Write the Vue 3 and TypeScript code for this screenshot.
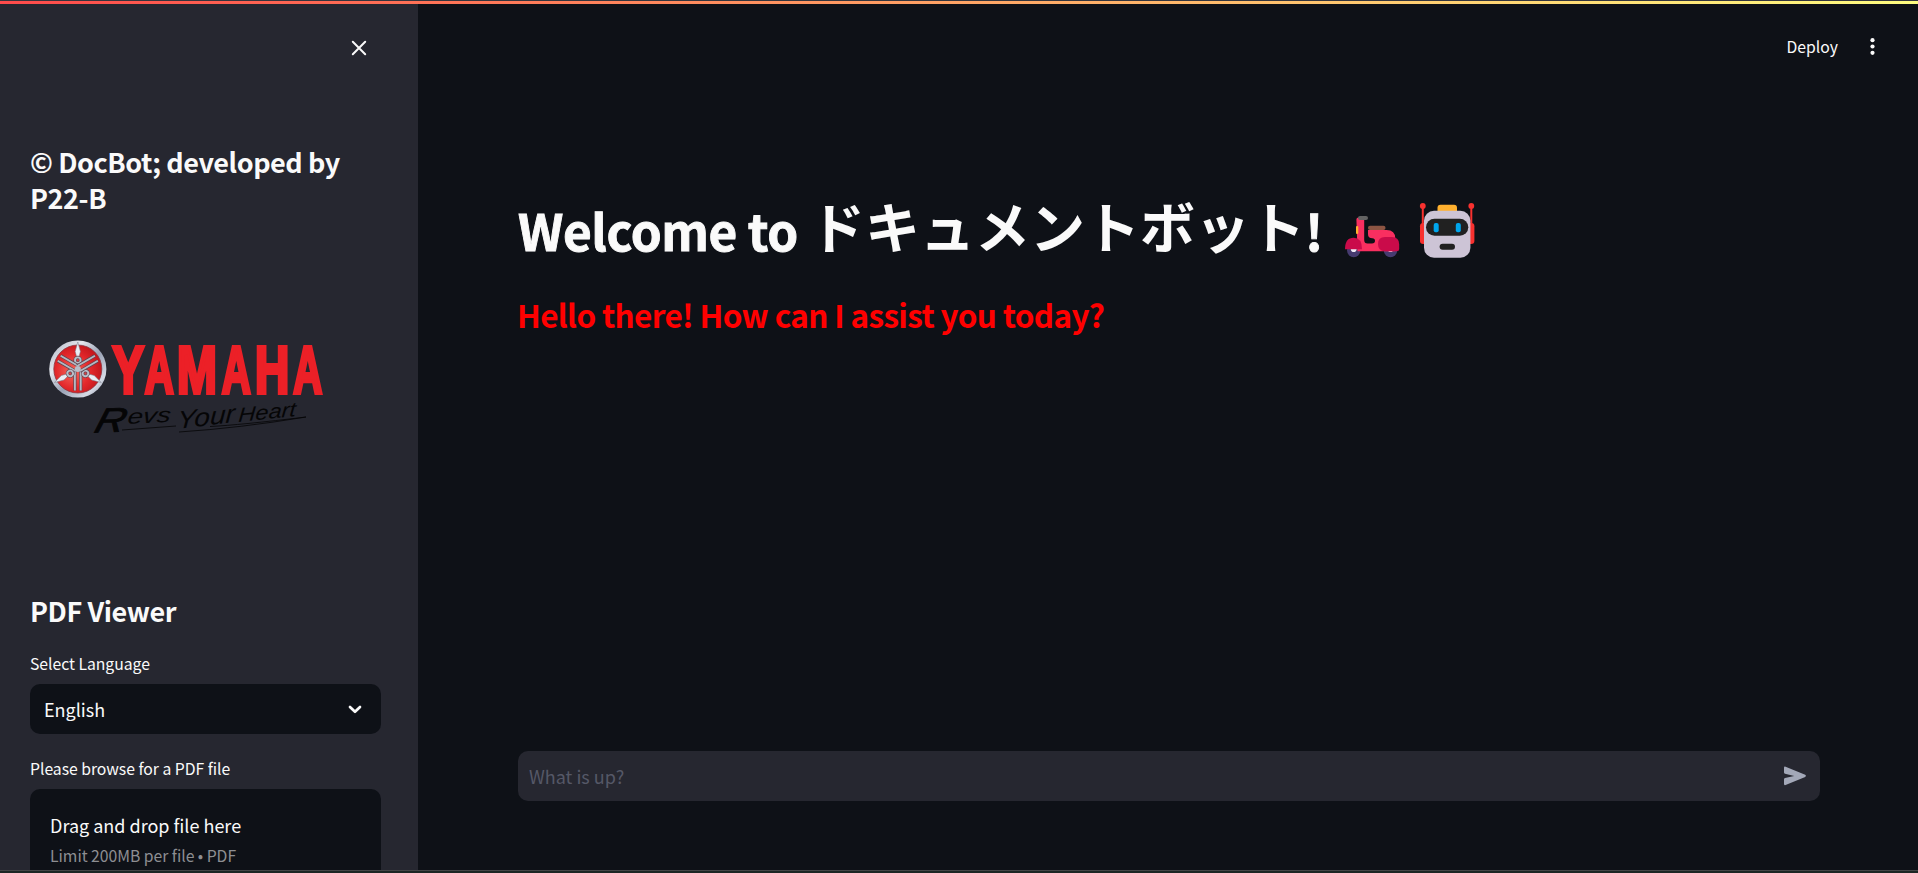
<script setup lang="ts">
import { ref } from 'vue'

interface BrandGlyph {
  char: string
  x: number
  width: number
}

const language = ref<string>('English')
const prompt = ref<string>('')
const spokes: number[] = [0, 120, 240]
const brand: BrandGlyph[] = [
  { char: 'Y', x: 118, width: 45 },
  { char: 'A', x: 164, width: 41.5 },
  { char: 'M', x: 210, width: 57 },
  { char: 'A', x: 274, width: 41.5 },
  { char: 'H', x: 321.5, width: 49 },
  { char: 'A', x: 376, width: 41.5 },
]
</script>

<template>
  <div class="app">
    <div class="decoration"></div>
    <aside class="sidebar">
      <div class="close-row">
        <button class="icon-button" aria-label="Close sidebar">
          <svg width="16" height="16" viewBox="0 0 16 16"><path d="M1.8 1.8 14.2 14.2M14.2 1.8 1.8 14.2" stroke="#fafafa" stroke-width="2" stroke-linecap="round" /></svg>
        </button>
      </div>
      <h2 class="credit">© DocBot; developed by P22-B</h2>
      <svg class="logo" width="310" height="130" viewBox="0 0 310 130">
        <defs>
          <linearGradient id="rim" x1="0" y1="0" x2="1" y2="1">
            <stop offset="0" stop-color="#a9adb9" />
            <stop offset=".3" stop-color="#e4e7ee" />
            <stop offset=".55" stop-color="#9aa2b5" />
            <stop offset=".8" stop-color="#d5dae5" />
            <stop offset="1" stop-color="#7d8498" />
          </linearGradient>
          <radialGradient id="disc" cx=".4" cy=".55" r=".6">
            <stop offset="0" stop-color="#f36b60" />
            <stop offset=".6" stop-color="#e3282b" />
            <stop offset="1" stop-color="#c3161c" />
          </radialGradient>
        </defs>
        <circle cx="47.8" cy="49" r="28.6" fill="url(#rim)" />
        <circle cx="47.8" cy="49" r="24" fill="url(#disc)" stroke="#8b3640" stroke-width=".8" />
        <g v-for="angle in spokes" :key="angle" :transform="`rotate(${angle} 47.8 49)`">
          <path d="M44.9 50V70.5M50.7 50V70.5" stroke="#5b4650" stroke-width="3.2" />
          <path d="M44.9 50V70.5M50.7 50V70.5" stroke="#b4b8c3" stroke-width="1.9" />
          <path d="M47.8 22 50.4 31.5 48.9 37H46.7L45.2 31.5Z" fill="#e9edf4" stroke="#777b89" stroke-width=".5" />
          <circle cx="47.8" cy="40.2" r="2.8" fill="#d94246" stroke="#5b4650" stroke-width="3.2" />
          <circle cx="47.8" cy="40.2" r="2.8" fill="none" stroke="#b9bdc8" stroke-width="1.9" />
        </g>
        <circle cx="47.8" cy="49" r="3" fill="#b9bdc8" />
        <g transform="translate(0 73) scale(.7 1)">
          <text class="brand" y="0"><tspan v-for="glyph in brand" :key="glyph.x" :x="glyph.x" :textLength="glyph.width" lengthAdjust="spacingAndGlyphs">{{ glyph.char }}</tspan></text>
        </g>
        <g class="tagline">
          <text transform="translate(63 112.5) rotate(-2) skewX(-18)" font-size="34" stroke="#050506" stroke-width=".8" textLength="30" lengthAdjust="spacingAndGlyphs">R</text>
          <text transform="translate(97 104) rotate(-3) skewX(-10)" font-size="21" textLength="43" lengthAdjust="spacingAndGlyphs">evs</text>
          <text transform="translate(147 109) rotate(-7) skewX(-10)" font-size="25" textLength="58" lengthAdjust="spacingAndGlyphs">Your</text>
          <text transform="translate(208 102) rotate(-6) skewX(-10)" font-size="20" textLength="58" lengthAdjust="spacingAndGlyphs">Heart</text>
          <path d="M92 110 146 106M149 112Q210 108 276 97Q210 105 180 106.5" fill="none" stroke="#050506" stroke-width=".8" />
        </g>
      </svg>
      <h2 class="viewer-title">PDF Viewer</h2>
      <label class="label">Select Language</label>
      <div class="select">
        <span>{{ language }}</span>
        <svg width="14" height="9" viewBox="0 0 14 9"><path d="M2 2 7 6.8 12 2" fill="none" stroke="#fafafa" stroke-width="2.7" stroke-linecap="round" stroke-linejoin="round" /></svg>
      </div>
      <label class="label">Please browse for a PDF file</label>
      <div class="dropzone">
        <span class="drop-title">Drag and drop file here</span>
        <span class="drop-limit">Limit 200MB per file • PDF</span>
      </div>
    </aside>
    <main class="main">
      <header class="toolbar">
        <span class="deploy">Deploy</span>
        <svg width="5" height="17" viewBox="0 0 5 17" fill="#fafafa"><circle cx="2.5" cy="2.2" r="2.1" /><circle cx="2.5" cy="8.5" r="2.1" /><circle cx="2.5" cy="14.8" r="2.1" /></svg>
      </header>
      <h1 class="title">
        <span class="title-latin">Welcome to</span>
        <span class="title-kana">ドキュメントボット</span>
        <span class="title-mark">!</span>
        <svg class="emoji" width="56" height="56" viewBox="0 0 56 56">
          <circle cx="9.7" cy="47.5" r="6.7" fill="#463b70" /><circle cx="9.7" cy="46.3" r="2.8" fill="#f3eef8" />
          <circle cx="46.5" cy="47.5" r="6.7" fill="#463b70" /><circle cx="46.5" cy="46.3" r="2.8" fill="#f3eef8" />
          <path d="M12.4 16.5Q12.4 14.5 14.5 14.5H20.2V37Q20.2 40.5 23.5 40.5H28Q31 40.5 31 37.8 31 35.3 28.4 35.3 24 35.3 24 31V27H42.5Q51.3 27 51.3 35.5V48.3H13.5Z" fill="#f92f60" />
          <path d="M1 46.2Q1 34.8 9.7 34.8 18 34.8 18 46.2Z" fill="#ca0b4a" />
          <path d="M34 41Q34 34 41 34H48Q55.2 34 55.2 41.5V46Q55.2 48.3 53 48.3H41Q34 48.3 34 41Z" fill="#ca0b4a" />
          <rect x="24" y="22.8" width="17.5" height="4.2" rx="2" fill="#8c5543" />
          <rect x="14" y="13" width="10" height="4" rx="2" fill="#636363" />
          <rect x="12" y="23" width="2.3" height="8" rx="1.1" fill="#ffb02e" />
        </svg>
        <svg class="emoji robot" width="56" height="56" viewBox="0 0 56 56">
          <path d="M3.8 3V25M52.3 3V25" stroke="#f8312f" stroke-width="2" />
          <circle cx="3.8" cy="2.9" r="2.9" fill="#f8312f" /><circle cx="52.3" cy="2.9" r="2.9" fill="#f8312f" />
          <rect x="1" y="20" width="54.4" height="21" rx="3.2" fill="#f8312f" />
          <rect x="18.5" y="1.7" width="19.5" height="10" rx="3" fill="#ffb02e" />
          <rect x="5" y="7.7" width="46.4" height="47" rx="10" fill="#cdc4d6" />
          <rect x="7" y="15.7" width="42.3" height="17" rx="8.5" fill="#212121" />
          <rect x="14.7" y="20" width="5" height="9.2" rx="2" fill="#00a6ed" />
          <rect x="36.8" y="20" width="5" height="9.2" rx="2" fill="#00a6ed" />
          <rect x="20.6" y="40.7" width="15.4" height="6" rx="3" fill="#212121" />
        </svg>
      </h1>
      <h3 class="greeting">Hello there! How can I assist you today?</h3>
      <div class="chat">
        <input v-model="prompt" class="chat-input" placeholder="What is up?" />
        <svg width="24" height="20" viewBox="0 0 24 20"><path d="M1 1.8Q1 .2 2.6 .7L22.2 8.8Q23.8 9.9 22.2 11L2.6 19.1Q1 19.6 1 18.1V13.3Q1 12.4 2 12L11.2 9.9 2 7.8Q1 7.5 1 6.6Z" fill="#a3a8b8" /></svg>
      </div>
    </main>
    <footer class="edge"></footer>
  </div>
</template>

<style>
body {
  margin: 0;
  background: #0e1117;
}
</style>

<style scoped>
.app {
  position: relative;
  display: flex;
  width: 100vw;
  height: 873px;
  overflow: hidden;
  color: #fafafa;
  background: #0e1117;
  font-family: "Noto Sans CJK JP", "Noto Sans", sans-serif;
}
.decoration {
  position: absolute;
  inset: 0 0 auto;
  height: 3px;
  border-top: 1px solid #35363e;
  background: linear-gradient(90deg, #ff4b4b, #fffd80);
}
.edge {
  position: absolute;
  inset: auto 0 0;
  height: 2px;
  border-top: 1px solid #434546;
  background: #1c2624;
}
.sidebar {
  box-sizing: border-box;
  width: 418px;
  flex: none;
  padding: 0 37px 0 30px;
  display: flex;
  flex-direction: column;
  background: #262730;
}
.close-row {
  box-sizing: border-box;
  flex: none;
  display: flex;
  justify-content: flex-end;
  height: 144px;
  padding: 40px 14px 0 0;
}
.icon-button {
  display: block;
  width: 16px;
  height: 16px;
  padding: 0;
  border: 0;
  background: none;
}
.icon-button svg { display: block; }
h1, h2, h3 { margin: 0; }
.credit, .viewer-title {
  flex: none;
  font-size: 27px;
  line-height: 36px;
  font-weight: 600;
  letter-spacing: -0.42px;
}
.logo {
  flex: none;
  margin: 104px 0 143px;
}
.brand {
  font: bold 66px "Liberation Sans", sans-serif;
  fill: #ec2027;
  stroke: #ec2027;
  stroke-width: 4px;
}
.tagline {
  font-family: "Liberation Sans", sans-serif;
  font-style: italic;
  fill: #050506;
}
.label {
  flex: none;
  margin-top: 22px;
  font-size: 15.75px;
  line-height: 26px;
  letter-spacing: -0.03px;
}
.select {
  box-sizing: border-box;
  flex: none;
  display: flex;
  align-items: center;
  justify-content: space-between;
  height: 50px;
  margin-top: 7px;
  padding: 0 19px 0 14px;
  border-radius: 10px;
  background: #0e1117;
  font-size: 18px;
  line-height: 32px;
}
.dropzone {
  flex: none;
  display: flex;
  flex-direction: column;
  height: 106px;
  margin-top: 7px;
  padding: 20px;
  border-radius: 10px;
  background: #0e1117;
  font-size: 18px;
}
.drop-title { line-height: 32px; }
.drop-limit {
  font-size: 15.75px;
  line-height: 30px;
  letter-spacing: -0.03px;
  color: #8d8e92;
}
.main {
  flex: 1;
  min-width: 0;
  display: flex;
  flex-direction: column;
}
.toolbar {
  flex: none;
  display: flex;
  align-items: center;
  justify-content: flex-end;
  gap: 32px;
  height: 93px;
  padding-right: 43px;
}
.deploy {
  font-size: 15.75px;
  line-height: 24px;
}
.title {
  display: flex;
  align-items: baseline;
  height: 66px;
  margin: 101px 0 0 100px;
  font-weight: 700;
  line-height: 66px;
  white-space: nowrap;
}
.title-latin, .title-mark {
  font-size: 49.5px;
  letter-spacing: -0.4px;
  -webkit-text-stroke: 0.9px #fafafa;
}
.title-latin { width: 292px; }
.title-mark { width: 39px; }
.title-kana {
  font-size: 55px;
  transform: translateY(-3px);
}
.emoji {
  flex: none;
  transform: translateY(8px);
}
.robot { margin-left: 18.5px; }
.greeting {
  margin: 33px 0 0 99px;
  font-size: 31.5px;
  line-height: 42px;
  font-weight: 600;
  letter-spacing: -0.65px;
  color: #f00;
}
.chat {
  box-sizing: border-box;
  flex: none;
  display: flex;
  align-items: center;
  height: 50px;
  margin: auto 98px 72px 100px;
  padding: 0 13px 0 11px;
  border-radius: 10px;
  background: #262730;
}
.chat-input {
  flex: 1;
  height: 32px;
  padding: 0;
  border: 0;
  outline: 0;
  background: none;
  color: #fafafa;
  font: 18px "Noto Sans CJK JP", sans-serif;
}
.chat-input::placeholder { color: #555867; opacity: 1; }
</style>
